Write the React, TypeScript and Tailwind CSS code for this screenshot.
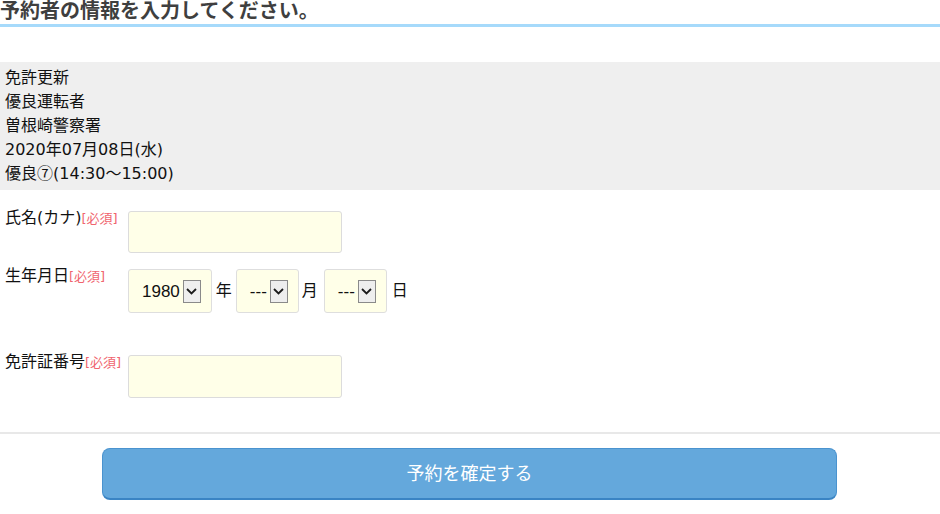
import React from 'react';

const font = { fontFamily: '"DejaVu Sans", "Noto Sans CJK JP", sans-serif' };
const selectFont = { fontFamily: '"Liberation Sans", "Noto Sans CJK JP", sans-serif' };
const cjkFont = { fontFamily: '"Noto Sans CJK JP", sans-serif' };

function Required() {
  return <span className="text-[13px] text-[#f0646e]">[必須]</span>;
}

function SelectBox({ value }: { value: string }) {
  return (
    <div className="flex h-[44px] items-center rounded-[3px] border border-[#dedede] bg-[#ffffe8] pl-[13px] pr-[10px]">
      <span className="text-[17px] leading-none text-[#111]" style={selectFont}>
        {value}
      </span>
      <span className="ml-[3px] flex h-[23px] w-[18px] items-center justify-center border border-[#8a8a8a] bg-[#eeeeee]">
        <svg width="11" height="7" viewBox="0 0 11 7">
          <path d="M1 1l4.5 4.5L10 1" fill="none" stroke="#1b1b1b" strokeWidth="1.8" />
        </svg>
      </span>
    </div>
  );
}

export default function App() {
  return (
    <div className="min-h-[514px] w-[940px] overflow-hidden bg-white text-[#111]" style={font}>
      {/* Heading */}
      <h2 className="-mt-[1px] border-b-[3px] border-[#a6dafb] text-[20px] font-bold leading-[25px] text-[#3f3f3f]">
        予約者の情報を入力してください。
      </h2>

      {/* Reservation summary */}
      <div className="mt-[35px] bg-[#efefef] px-[5px] py-[4px] text-[16px] leading-[24px]">
        <p className="h-[24px]">免許更新</p>
        <p className="h-[24px]">優良運転者</p>
        <p className="h-[24px]">曽根崎警察署</p>
        <p className="h-[24px]">2020年07月08日(水)</p>
        <p className="h-[24px]">
          優良<span className="leading-none" style={cjkFont}>⑦</span>(14:30～15:00)
        </p>
      </div>

      {/* Form */}
      <div className="mt-[21px] flex flex-col">
        <div className="flex">
          <div className="w-[128px] pl-[5px] text-[16px] leading-[14px]">
            氏名(カナ)<Required />
          </div>
          <div className="h-[42px] w-[214px] rounded-[3px] border border-[#dcdcdc] bg-[#ffffe8]" />
        </div>

        <div className="mt-[16px] flex">
          <div className="w-[128px] pl-[5px] text-[16px] leading-[14px]">
            生年月日<Required />
          </div>
          <div className="flex items-center text-[16px]">
            <SelectBox value="1980" />
            <span className="ml-[4px] mr-[4px]">年</span>
            <SelectBox value="---" />
            <span className="ml-[3px] mr-[6px]">月</span>
            <SelectBox value="---" />
            <span className="ml-[5px]">日</span>
          </div>
        </div>

        <div className="mt-[42px] flex">
          <div className="w-[128px] pl-[5px] text-[16px] leading-[14px]">
            免許証番号<Required />
          </div>
          <div className="h-[43px] w-[214px] rounded-[3px] border border-[#dcdcdc] bg-[#ffffe8]" />
        </div>
      </div>

      <div className="mt-[34px] border-t-2 border-[#e8e8e8]" />

      {/* Submit */}
      <div className="mt-[14px] pl-[102px]">
        <button className="h-[52px] w-[735px] rounded-[8px] border border-[#4a93cf] border-b-[2px] border-b-[#3a84c4] bg-[#64a8dc] text-[18px] text-white">
          予約を確定する
        </button>
      </div>
    </div>
  );
}
